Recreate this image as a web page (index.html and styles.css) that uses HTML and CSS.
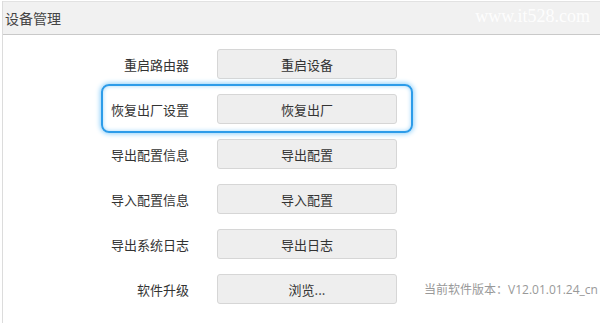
FILE: index.html
```html
<!DOCTYPE html>
<html lang="zh-CN">

<head>
    <meta charset="UTF-8">
    <meta name="viewport" content="width=device-width, initial-scale=1.0">
    <title>设备管理</title>
    <link rel="stylesheet" href="styles.css">
</head>

<body>
    <div class="panel">
        <div class="panelHead">
            <span class="title">设备管理</span>
            <span class="mark">www.it528.com</span>
        </div>
        <div class="panelBody">
            <div class="row">
                <label>重启路由器</label>
                <button class="btn">重启设备</button>
            </div>
            <div class="row active">
                <label>恢复出厂设置</label>
                <button class="btn">恢复出厂</button>
            </div>
            <div class="row">
                <label>导出配置信息</label>
                <button class="btn">导出配置</button>
            </div>
            <div class="row">
                <label>导入配置信息</label>
                <button class="btn">导入配置</button>
            </div>
            <div class="row">
                <label>导出系统日志</label>
                <button class="btn">导出日志</button>
            </div>
            <div class="row">
                <label>软件升级</label>
                <button class="btn">浏览...</button>
                <span class="version">当前软件版本：V12.01.01.24_cn</span>
            </div>
        </div>
    </div>
</body>

</html>
```

FILE: styles.css
```css
* {
    margin: 0;
    padding: 0;
    box-sizing: border-box;
}

body {
    background: #fff;
    font-family: "Noto Sans CJK SC", "Noto Sans", sans-serif;
    color: #333;
    overflow: hidden;
}

.panel {
    margin: 1px 0 0 2px;
    border-left: 1px solid #dcdcdc;
    height: 330px;
}

.panelHead {
    position: relative;
    height: 34px;
    background: #f1f1f1;
    border-top: 1px solid #e2e2e2;
    border-bottom: 1px solid #c9c9c9;
    display: flex;
    align-items: center;
    padding-left: 2px;
}

.title {
    font-size: 14px;
    color: #444;
}

.mark {
    position: absolute;
    right: 10px;
    top: 4px;
    font-size: 18px;
    font-family: "Liberation Serif", serif;
    color: rgba(255, 255, 255, 0.9);
}

.panelBody {
    padding-top: 14px;
}

.row {
    position: relative;
    display: flex;
    align-items: center;
    height: 30px;
    margin-bottom: 15px;
}

.row label {
    width: 186px;
    text-align: right;
    font-size: 13px;
    color: #333;
}

.btn {
    margin-left: 28px;
    width: 180px;
    height: 30px;
    background: #eeeeee;
    border: 1px solid #d6d6d6;
    border-radius: 3px;
    font-family: inherit;
    font-size: 13px;
    color: #333;
}

.version {
    margin-left: 27px;
    font-family: "Open Sans", "Noto Sans CJK SC", sans-serif;
    font-size: 12px;
    color: #999;
    white-space: nowrap;
}

.row.active::before {
    content: "";
    position: absolute;
    left: 98px;
    top: -10px;
    width: 308px;
    height: 45px;
    border: 2px solid #2d9ce9;
    border-radius: 8px;
    box-shadow: 0 0 5px 1px #8fd0fa, inset 0 0 4px #9fd6fa;
}
```
